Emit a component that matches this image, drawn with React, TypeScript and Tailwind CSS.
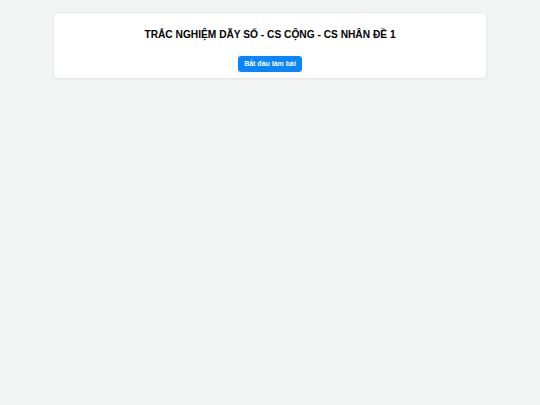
import React from 'react';

export default function App() {
  return (
    <div className="min-h-[405px] w-full bg-[#f3f4f4] pt-3" style={{ fontFamily: '"Liberation Sans", Arial, sans-serif' }}>
      <div className="mx-auto w-[434px] rounded-[4px] border border-[#e6e8e8] bg-white pt-[14px] pb-[6px] shadow-[0_1px_2px_rgba(0,0,0,0.04)]">
        <h1 className="text-center text-[10.2px] font-bold leading-[16px] text-black">
          TRẮC NGHIỆM DÃY SỐ - CS CỘNG - CS NHÂN ĐỀ 1
        </h1>
        <div className="mt-[13px] flex justify-center">
          <button className="h-[16px] w-[64px] rounded-[3px] bg-[#0a84ff] text-[7px] font-bold leading-[16px] text-white">
            Bắt đầu làm bài
          </button>
        </div>
      </div>
    </div>
  );
}
